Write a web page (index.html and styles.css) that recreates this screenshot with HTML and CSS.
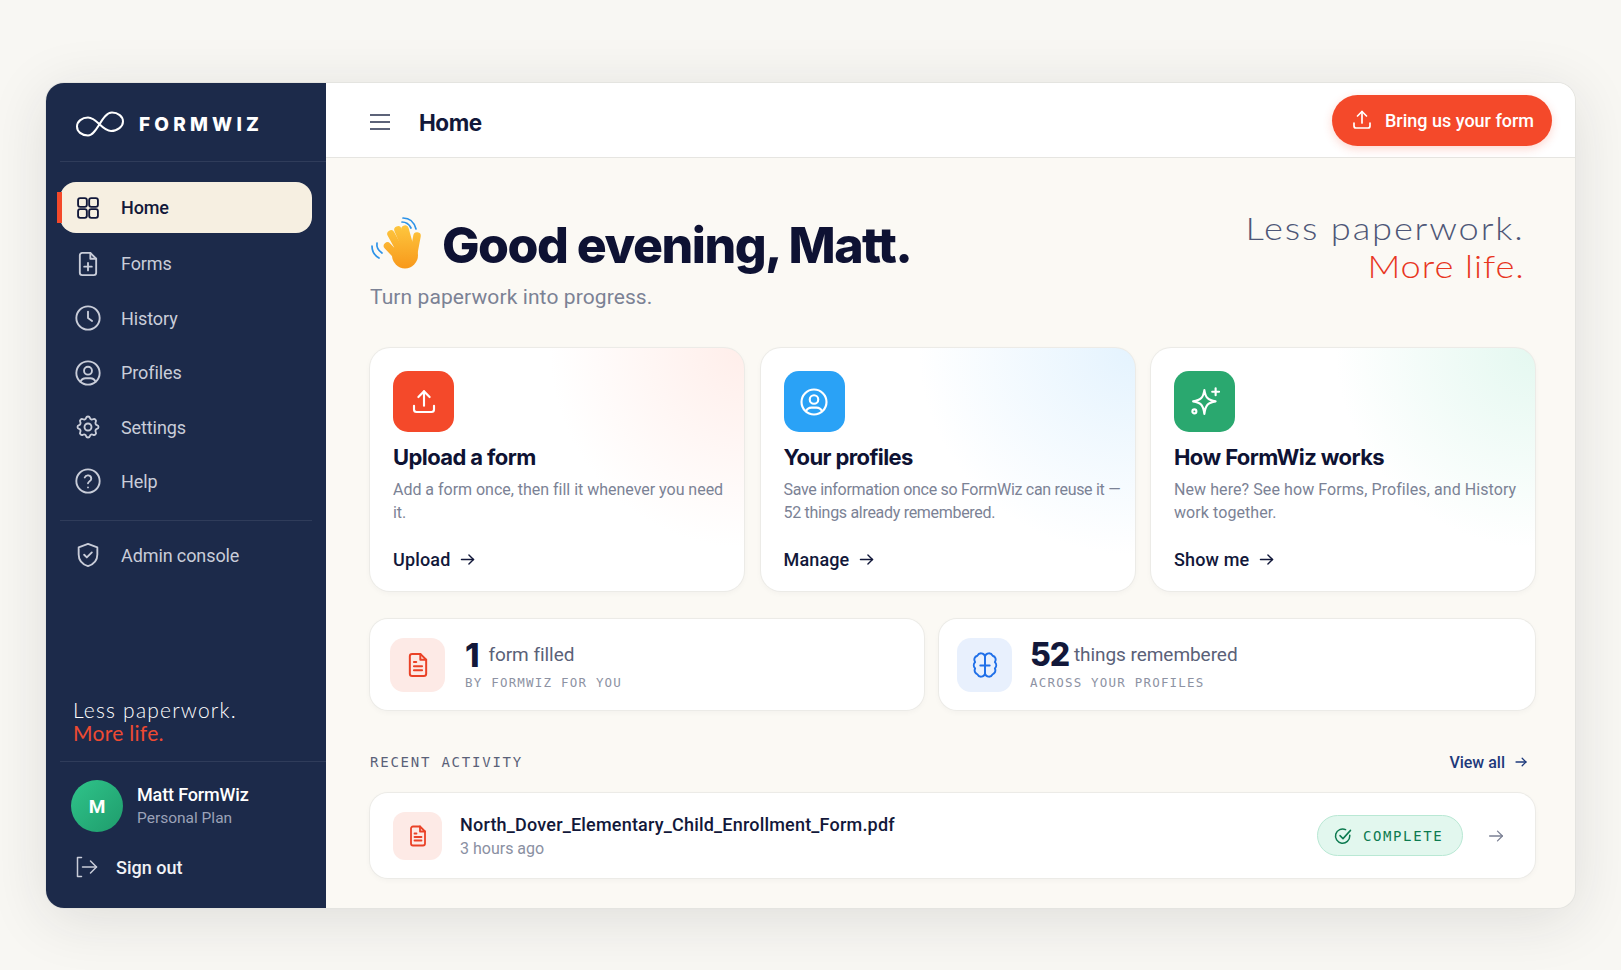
FILE: index.html
```html
<!DOCTYPE html>
<html lang="en">
<head>
<meta charset="utf-8">
<title>FormWiz</title>
<link rel="stylesheet" href="styles.css">
</head>
<body>
<svg class="defs" width="0" height="0" aria-hidden="true">
  <defs>
    <symbol id="i-upload" viewBox="0 0 24 24"><path d="M4 15v3a2 2 0 0 0 2 2h12a2 2 0 0 0 2-2v-3"/><path d="M12 15V3.500"/><path d="M7.500 8 12 3.500 16.500 8"/></symbol>
    <symbol id="i-arrow" viewBox="0 0 24 24"><path d="M3.500 12h17"/><path d="M14 5.500 20.500 12 14 18.500"/></symbol>
    <symbol id="i-file" viewBox="0 0 24 24"><path d="M14 2.500H7a2 2 0 0 0-2 2v15a2 2 0 0 0 2 2h10a2 2 0 0 0 2-2V7.500z"/><path d="M14 2.500v5h5"/><path d="M8.500 9.500h2"/><path d="M8.500 13h7"/><path d="M8.500 16.500h7"/></symbol>
    <symbol id="i-user" viewBox="0 0 24 24"><circle cx="12" cy="12" r="10"/><circle cx="12" cy="10" r="3.400"/><path d="M5.500 19.500a5 5 0 0 1 4.500-3h4a5 5 0 0 1 4.500 3"/></symbol>
  </defs>
</svg>
<div class="stage">
  <div class="frame">
    <aside class="sidebar">
      <div class="brand">
        <svg class="infinity" viewBox="0 0 48 26"><path d="M12 24.500C5.500 24.500 1 20.500 1 15.500S6 6.500 12 6.500C21 6.500 26 20 35 20c6.500 0 12-4.500 12-9.500S42 1.500 36 1.500C26 1.500 21 24.500 12 24.500z"/></svg>
        <span class="wordmark">FORMWIZ</span>
      </div>
      <nav class="nav">
        <a class="nav-item active">
          <svg class="nav-icon" viewBox="0 0 24 24"><rect x="3.500" y="3.500" width="7.500" height="7.500" rx="1.800"/><rect x="13" y="3.500" width="7.500" height="7.500" rx="1.800"/><rect x="3.500" y="13" width="7.500" height="7.500" rx="1.800"/><rect x="13" y="13" width="7.500" height="7.500" rx="1.800"/></svg>
          <span>Home</span>
        </a>
        <a class="nav-item">
          <svg class="nav-icon" viewBox="0 0 24 24"><path d="M14 2.500H7a2 2 0 0 0-2 2v15a2 2 0 0 0 2 2h10a2 2 0 0 0 2-2V7.500z"/><path d="M14 2.500v5h5"/><path d="M12 11v6.500"/><path d="M8.750 14.250h6.500"/></svg>
          <span>Forms</span>
        </a>
        <a class="nav-item">
          <svg class="nav-icon" viewBox="0 0 24 24"><circle cx="12" cy="12" r="10"/><path d="M12 6.500V12l3.500 2.500"/></svg>
          <span>History</span>
        </a>
        <a class="nav-item">
          <svg class="nav-icon"><use href="#i-user"/></svg>
          <span>Profiles</span>
        </a>
        <a class="nav-item">
          <svg class="nav-icon" viewBox="0 0 24 24"><path d="M10.325 4.317c.426-1.756 2.924-1.756 3.350 0a1.724 1.724 0 0 0 2.573 1.066c1.543-.94 3.310.826 2.370 2.370a1.724 1.724 0 0 0 1.065 2.572c1.756.426 1.756 2.924 0 3.350a1.724 1.724 0 0 0-1.066 2.573c.94 1.543-.826 3.310-2.370 2.370a1.724 1.724 0 0 0-2.572 1.065c-.426 1.756-2.924 1.756-3.350 0a1.724 1.724 0 0 0-2.573-1.066c-1.543.94-3.310-.826-2.370-2.370a1.724 1.724 0 0 0-1.065-2.572c-1.756-.426-1.756-2.924 0-3.350a1.724 1.724 0 0 0 1.066-2.573c-.94-1.543.826-3.310 2.370-2.370 1 .608 2.296.07 2.572-1.065z"/><circle cx="12" cy="12" r="3"/></svg>
          <span>Settings</span>
        </a>
        <a class="nav-item">
          <svg class="nav-icon" viewBox="0 0 24 24"><circle cx="12" cy="12" r="10"/><path d="M9.200 9a2.900 2.900 0 0 1 5.600 1c0 2-2.800 2.500-2.800 4"/><path d="M12 17.500v.01"/></svg>
          <span>Help</span>
        </a>
      </nav>
      <div class="side-rule"></div>
      <a class="nav-item">
        <svg class="nav-icon" viewBox="0 0 24 24"><path d="M12 2.500 20 5.500v6c0 5-3.400 8.500-8 10-4.600-1.500-8-5-8-10v-6z"/><path d="m8.700 11.800 2.300 2.300 4.300-4.300"/></svg>
        <span>Admin console</span>
      </a>
      <div class="side-tag">
        <span class="tag-line">Less paperwork.</span>
        <span class="tag-line tag-red">More life.</span>
      </div>
      <div class="side-user">
        <div class="avatar">M</div>
        <div class="user-text">
          <div class="user-name">Matt FormWiz</div>
          <div class="user-plan">Personal Plan</div>
        </div>
      </div>
      <a class="signout">
        <svg class="signout-icon" viewBox="0 0 24 24"><path d="M7.500 2.500H3.500v19h4"/><path d="M8.500 12h14"/><path d="M16.500 6l6 6-6 6"/></svg>
        <span>Sign out</span>
      </a>
    </aside>
    <main class="main">
      <header class="topbar">
        <svg class="burger" viewBox="0 0 20 20"><path d="M0 3h20M0 10h20M0 17h20"/></svg>
        <div class="top-title">Home</div>
        <button class="cta">
          <svg class="cta-icon"><use href="#i-upload"/></svg>
          <span>Bring us your form</span>
        </button>
      </header>
      <div class="content">
        <section class="hero">
          <div>
            <div class="greeting">
              <svg class="wave" viewBox="6 9 52 52">
                <defs><linearGradient id="handfill" gradientUnits="userSpaceOnUse" x1="40" y1="18" x2="40" y2="60"><stop offset="0" stop-color="#fdc63e"/><stop offset="1" stop-color="#f8991b"/></linearGradient></defs>
                <g class="wave-arcs"><path d="M38 14q6 0 9 6"/><path d="M39 10q10 0 13 11"/><path d="M8 38q0 8 7 12"/><path d="M13 35q-1 6 5 10"/></g>
                <g class="wave-fingers"><path d="M23.500 38 36 51"/><path d="M27 26 38 46"/><path d="M34 22 43 43"/><path d="M41 21 47 43"/><path d="M53 28 50 44"/></g>
                <ellipse class="wave-palm" cx="41" cy="47" rx="13" ry="13.500"/>
              </svg>
              <h1 class="h1">Good evening, Matt.</h1>
            </div>
            <p class="sub">Turn paperwork into progress.</p>
          </div>
          <div class="hero-tag">
            <div class="hero-less">Less paperwork.</div>
            <div class="hero-more">More life.</div>
          </div>
        </section>
        <section class="cards">
          <article class="card card-red">
            <div class="card-icon icon-red"><svg class="ci"><use href="#i-upload"/></svg></div>
            <h2 class="card-title">Upload a form</h2>
            <p class="card-desc">Add a form once, then fill it whenever you need it.</p>
            <a class="card-link"><span>Upload</span><svg class="link-arrow"><use href="#i-arrow"/></svg></a>
          </article>
          <article class="card card-blue">
            <div class="card-icon icon-blue"><svg class="ci"><use href="#i-user"/></svg></div>
            <h2 class="card-title">Your profiles</h2>
            <p class="card-desc">Save information once so FormWiz can reuse it — 52 things already remembered.</p>
            <a class="card-link"><span>Manage</span><svg class="link-arrow"><use href="#i-arrow"/></svg></a>
          </article>
          <article class="card card-green">
            <div class="card-icon icon-green">
              <svg class="ci" viewBox="0 0 24 24"><path d="M11.500 2.500c.9 6 2.700 8 9 9-6.300 1-8.100 3-9 10-.9-7-2.700-9-9-10 6.300-1 8.100-3 9-9z"/><path d="M20.500 1v5.500M17.750 3.750h5.500"/><circle cx="3.500" cy="19.500" r="1.600"/></svg>
            </div>
            <h2 class="card-title">How FormWiz works</h2>
            <p class="card-desc">New here? See how Forms, Profiles, and History work together.</p>
            <a class="card-link"><span>Show me</span><svg class="link-arrow"><use href="#i-arrow"/></svg></a>
          </article>
        </section>
        <section class="stats">
          <div class="stat">
            <div class="stat-icon tint-red"><svg class="si"><use href="#i-file"/></svg></div>
            <div>
              <div class="stat-main stat-main-wide"><span class="stat-num">1</span><span class="stat-label">form filled</span></div>
              <div class="stat-sub">BY FORMWIZ FOR YOU</div>
            </div>
          </div>
          <div class="stat stat-second">
            <div class="stat-icon tint-blue">
              <svg class="si" viewBox="0 0 24 24"><path d="M12 4.500a3.500 3.500 0 0 0-6.500-.5 3.500 3.500 0 0 0-2 5.500 4 4 0 0 0 0 5.500 3.500 3.500 0 0 0 2 5 3.500 3.500 0 0 0 6.500-.5 3.500 3.500 0 0 0 6.500.5 3.500 3.500 0 0 0 2-5 4 4 0 0 0 0-5.500 3.500 3.500 0 0 0-2-5.500 3.500 3.500 0 0 0-6.500.5z"/><path d="M12 4.500v15.500"/><path d="M8 12.500h8"/></svg>
            </div>
            <div>
              <div class="stat-main"><span class="stat-num">52</span><span class="stat-label">things remembered</span></div>
              <div class="stat-sub">ACROSS YOUR PROFILES</div>
            </div>
          </div>
        </section>
        <section class="recent-head">
          <div class="recent-label">RECENT ACTIVITY</div>
          <a class="view-all"><span>View all</span><svg class="va-arrow"><use href="#i-arrow"/></svg></a>
        </section>
        <section class="row">
          <div class="row-icon tint-red"><svg class="ri"><use href="#i-file"/></svg></div>
          <div class="row-text">
            <div class="row-title">North_Dover_Elementary_Child_Enrollment_Form.pdf</div>
            <div class="row-time">3 hours ago</div>
          </div>
          <div class="badge">
            <svg class="badge-icon" viewBox="0 0 24 24"><path d="M21 11v1a9.500 9.500 0 1 1-5.500-8.500"/><path d="m8 11.500 4 4L22 4.500"/></svg>
            <span>COMPLETE</span>
          </div>
          <svg class="row-arrow"><use href="#i-arrow"/></svg>
        </section>
      </div>
    </main>
  </div>
</div>
</body>
</html>
```
FILE: styles.css
```css
* { box-sizing: border-box; }
html, body { margin: 0; height: 100%; }
body {
  background: #f8f7f3;
  font-family: Roboto, "Noto Sans", sans-serif;
  color: #12183a;
  overflow: hidden;
}
.defs { position: absolute; }
svg { fill: none; stroke: currentColor; stroke-linecap: round; stroke-linejoin: round; flex: none; }
.stage { padding: 83px 46px 62px; }
.frame {
  display: flex;
  width: 1529px;
  height: 825px;
  border-radius: 18px;
  overflow: hidden;
  background: #fbf9f4;
  box-shadow: 0 0 0 1px #e4e4e0, 0 10px 60px rgba(30, 30, 40, .12);
}

/* sidebar */
.sidebar {
  width: 280px;
  flex: none;
  display: flex;
  flex-direction: column;
  background: #1c2a4a;
  color: #c9cdd9;
}
.brand {
  height: 79px;
  margin-left: 14px;
  padding: 4px 0 0 16px;
  display: flex;
  align-items: center;
  gap: 15px;
  border-bottom: 1px solid #2f3c5a;
}
.infinity { width: 48px; height: 26px; stroke: #fff; stroke-width: 2; }
.wordmark {
  font: 800 19px Inter, sans-serif;
  letter-spacing: 4.200px;
  color: #fff;
}
.nav { display: flex; flex-direction: column; gap: 3.400px; padding-top: 20px; }
.nav-item {
  display: flex;
  align-items: center;
  gap: 19px;
  height: 51px;
  margin: 0 14px 0 13.500px;
  padding-left: 14.500px;
  font-size: 18px;
  letter-spacing: -.1px;
  flex: none;
}
.nav-item.active {
  position: relative;
  margin-bottom: 2px;
  background: #f6efe1;
  color: #12183a;
  border-radius: 16px;
  font-weight: 500;
}
.nav-item.active::before {
  content: "";
  position: absolute;
  left: -3px;
  top: 10px;
  width: 5px;
  height: 31px;
  background: #f4492a;
}
.nav-icon { width: 28px; height: 28px; stroke-width: 1.600; }
.side-rule { height: 1px; margin: 13px 14px 9px; background: #2f3c5a; }
.side-tag {
  margin: auto 0 0 27px;
  padding-bottom: 17px;
  display: flex;
  flex-direction: column;
  font: 300 21px/23px Lato, sans-serif;
  color: #fff;
  letter-spacing: 1.200px;
}
.tag-red { color: #ee4a32; font-weight: 400; letter-spacing: .3px; }
.side-user {
  margin-left: 14px;
  padding: 18px 0 0 11px;
  border-top: 1px solid #2f3c5a;
  display: flex;
  align-items: center;
  gap: 14px;
}
.avatar {
  width: 52px;
  height: 52px;
  border-radius: 50%;
  background: linear-gradient(135deg, #2fc48a, #1f9c6c);
  color: #fff;
  font-weight: 700;
  font-size: 19px;
  display: flex;
  align-items: center;
  justify-content: center;
}
.user-name { font-size: 18px; line-height: 24px; font-weight: 500; letter-spacing: -.15px; color: #fff; }
.user-plan { font-size: 15.500px; line-height: 22px; color: #9ba2b8; }
.signout {
  margin: 22px 0 28px 28px;
  display: flex;
  align-items: center;
  gap: 18px;
  height: 26px;
  font-size: 18px;
  font-weight: 500;
  color: #f1f2f6;
}
.signout-icon { width: 24px; height: 24px; stroke-width: 1.500; stroke: #c9cdd9; }

/* main */
.main { flex: 1; min-width: 0; display: flex; flex-direction: column; }
.topbar {
  height: 75px;
  flex: none;
  display: flex;
  align-items: center;
  padding: 4px 23px 0 44px;
  background: #fff;
  border-bottom: 1px solid #e6e5e1;
}
.burger { width: 20px; height: 20px; stroke: #5c6379; stroke-width: 2; }
.top-title {
  margin-left: 29px;
  font: 700 22.500px Inter, sans-serif;
  letter-spacing: -.45px;
  color: #12183a;
}
.cta {
  margin: -4px 0 0 auto;
  width: 220px;
  height: 51px;
  border: 0;
  border-radius: 26px;
  background: #f4492a;
  color: #fff;
  font-family: Roboto, sans-serif;
  font-size: 18px;
  font-weight: 500;
  display: flex;
  align-items: center;
  justify-content: center;
  gap: 11px;
  box-shadow: 0 3px 10px rgba(244, 73, 42, .22);
}
.cta-icon { width: 24px; height: 24px; stroke-width: 1.700; }
.content { padding: 56px 40px 0 44px; }
.hero { display: flex; justify-content: space-between; align-items: flex-start; height: 98px; }
.greeting { display: flex; align-items: center; gap: 20px; height: 58px; }
.wave { width: 52px; height: 52px; }
.wave-arcs { stroke: #2d93e8; stroke-width: 1.700; }
.wave-fingers { stroke: url(#handfill); stroke-width: 7.500; }
.wave-palm { fill: url(#handfill); stroke: none; }
.h1 {
  margin: 4px 0 0;
  font: 800 50px/58px Inter, sans-serif;
  letter-spacing: -1.500px;
  color: #0e1233;
}
.sub { margin: 11px 0 0; font-size: 21px; line-height: 28px; letter-spacing: .1px; color: #7b8295; }
.hero-tag {
  margin: -5px 10px 0 0;
  text-align: right;
  font: 300 31.500px/38px Lato, sans-serif;
  letter-spacing: 1.600px;
  transform: scaleX(1.15);
  transform-origin: right center;
}
.hero-less { color: #4e5777; }
.hero-more { color: #e8361f; letter-spacing: .8px; }

/* action cards */
.cards { display: grid; grid-template-columns: 374px 374px 1fr; gap: 16.500px; margin-top: 36px; height: 243px; }
.card {
  padding: 23px 12px 20px 23px;
  border-radius: 20px;
  background-color: #fff;
  box-shadow: 0 0 0 1px #ecebe7, 0 2px 6px rgba(30, 30, 40, .04);
  display: flex;
  flex-direction: column;
}
.card-red { background-image: radial-gradient(ellipse 52% 82% at 100% 0, #ffeeea 0%, #ffffff00 100%); }
.card-blue { background-image: radial-gradient(ellipse 58% 85% at 100% 0, #e4f3fe 0%, #ffffff00 100%); }
.card-green { background-image: radial-gradient(ellipse 52% 82% at 100% 0, #e4f8f0 0%, #ffffff00 100%); }
.card-icon {
  width: 61px;
  height: 61px;
  border-radius: 15px;
  color: #fff;
  display: flex;
  align-items: center;
  justify-content: center;
}
.icon-red { background: #f4492a; }
.icon-blue { background: #2aa2f6; }
.icon-green { background: #2aa86f; }
.ci { width: 30px; height: 30px; stroke-width: 1.700; }
.card-title {
  margin: 11px 0 0;
  font: 700 22px/28px Inter, sans-serif;
  letter-spacing: -.6px;
  color: #0e1233;
}
.card-desc { margin: 7px 0 0; font-size: 16px; line-height: 23px; letter-spacing: -.02px; color: #7b8295; }
.card-blue .card-desc { letter-spacing: -.3px; }
.card-green .card-desc { letter-spacing: .08px; }
.card-link {
  margin-top: auto;
  display: flex;
  align-items: center;
  gap: 9px;
  height: 24px;
  font-size: 18px;
  font-weight: 500;
  letter-spacing: .15px;
  color: #12183a;
}
.link-arrow { width: 17px; height: 17px; stroke-width: 2; }

/* stats */
.stats { display: grid; grid-template-columns: 554px 1fr; gap: 15px; margin-top: 28px; }
.stat {
  height: 91px;
  padding: 0 0 0 20px;
  display: flex;
  align-items: center;
  gap: 20px;
  background: #fff;
  border-radius: 18px;
  box-shadow: 0 0 0 1px #ecebe7, 0 2px 6px rgba(30, 30, 40, .04);
}
.stat-second { padding-left: 18px; gap: 18px; }
.stat-icon { width: 55px; height: 54px; border-radius: 14px; display: flex; align-items: center; justify-content: center; }
.tint-red { background: #fdeae6; color: #ea4227; }
.tint-blue { background: #e8f0fd; color: #1f6fe8; }
.si { width: 28px; height: 28px; stroke-width: 1.700; }
.stat-main { display: flex; align-items: center; gap: 5px; height: 34px; }
.stat-main-wide { gap: 8px; }
.stat-main-wide .stat-num { padding-right: 2px; font-size: 33px; }
.stat-num { font: 800 32px/34px Inter, sans-serif; letter-spacing: -1.200px; color: #12183a; }
.stat-label { font-size: 19px; letter-spacing: -.05px; color: #5a6178; }
.stat-sub {
  margin-top: 2px;
  font: 12.500px/18px "DejaVu Sans Mono", monospace;
  letter-spacing: 1.200px;
  color: #8d92a3;
}

/* recent */
.recent-head { display: flex; align-items: center; justify-content: space-between; height: 24px; margin-top: 40px; }
.recent-label { font: 14px "DejaVu Sans Mono", monospace; letter-spacing: 1.770px; color: #5a6178; }
.view-all {
  display: flex;
  align-items: center;
  gap: 9px;
  margin-right: 7px;
  font-size: 16px;
  font-weight: 500;
  color: #1e3a7b;
}
.va-arrow { width: 14px; height: 14px; stroke-width: 2.200; }
.row {
  margin-top: 19px;
  height: 85px;
  padding: 0 30px 0 23px;
  display: flex;
  align-items: center;
  background: #fff;
  border-radius: 18px;
  box-shadow: 0 0 0 1px #ecebe7, 0 2px 6px rgba(30, 30, 40, .04);
}
.row-icon { width: 49px; height: 48px; border-radius: 12px; display: flex; align-items: center; justify-content: center; }
.ri { width: 24px; height: 24px; stroke-width: 1.800; }
.row-text { margin-left: 18px; padding-top: 2px; }
.row-title { font-size: 18px; line-height: 24px; font-weight: 500; letter-spacing: .2px; color: #12183a; }
.row-time { margin-top: 1px; font-size: 16px; line-height: 22px; color: #8a90a2; }
.badge {
  margin-left: auto;
  width: 146px;
  height: 41px;
  padding-left: 16px;
  display: flex;
  align-items: center;
  gap: 11px;
  background: #e2f7ee;
  border: 1px solid #b9e8d4;
  border-radius: 21px;
  font: 14px "DejaVu Sans Mono", monospace;
  letter-spacing: 1.600px;
  color: #0d7a50;
}
.badge-icon { width: 18px; height: 18px; stroke-width: 2; }
.row-arrow { width: 18px; height: 18px; margin-left: 24px; stroke: #7b8094; stroke-width: 1.700; }
```
